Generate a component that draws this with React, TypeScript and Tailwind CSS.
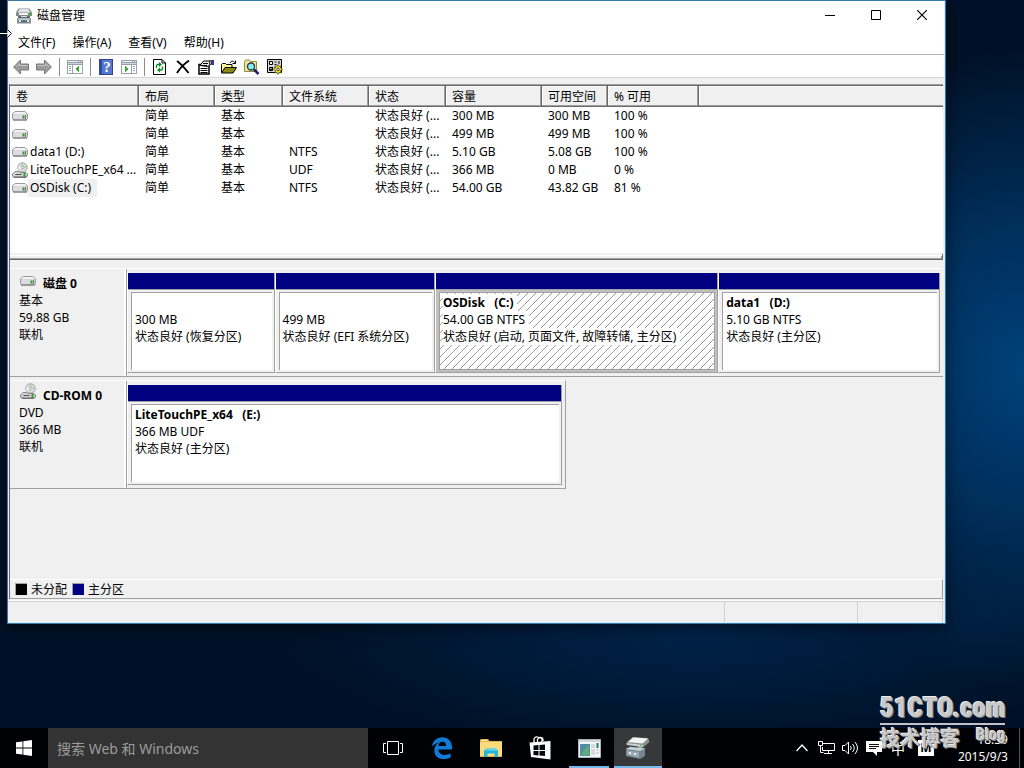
import React from "react";

interface Volume {
  name: string;
  kind: "disk" | "cd";
  fs: string;
  capacity: string;
  free: string;
  percent: string;
  selected?: boolean;
}

interface Part {
  title: string;
  size: string;
  status: string;
  grow: string;
  selected?: boolean;
}

const volumes: Volume[] = [
  { name: "", kind: "disk", fs: "", capacity: "300 MB", free: "300 MB", percent: "100 %" },
  { name: "", kind: "disk", fs: "", capacity: "499 MB", free: "499 MB", percent: "100 %" },
  { name: "data1 (D:)", kind: "disk", fs: "NTFS", capacity: "5.10 GB", free: "5.08 GB", percent: "100 %" },
  { name: "LiteTouchPE_x64 ...", kind: "cd", fs: "UDF", capacity: "366 MB", free: "0 MB", percent: "0 %" },
  { name: "OSDisk (C:)", kind: "disk", fs: "NTFS", capacity: "54.00 GB", free: "43.82 GB", percent: "81 %", selected: true },
];

const columns = [
  { label: "卷", width: "w-[129px]" },
  { label: "布局", width: "w-[76px]" },
  { label: "类型", width: "w-[68px]" },
  { label: "文件系统", width: "w-[86px]" },
  { label: "状态", width: "w-[77px]" },
  { label: "容量", width: "w-[96px]" },
  { label: "可用空间", width: "w-[66px]" },
  { label: "% 可用", width: "w-[91px]" },
  { label: "", width: "" },
];

const diskParts: Part[] = [
  { title: "", size: "300 MB", status: "状态良好 (恢复分区)", grow: "flex-[147]" },
  { title: "", size: "499 MB", status: "状态良好 (EFI 系统分区)", grow: "flex-[160]" },
  { title: "OSDisk   (C:)", size: "54.00 GB NTFS", status: "状态良好 (启动, 页面文件, 故障转储, 主分区)", grow: "flex-[284]", selected: true },
  { title: "data1   (D:)", size: "5.10 GB NTFS", status: "状态良好 (主分区)", grow: "flex-[222]" },
];

const cdParts: Part[] = [
  { title: "LiteTouchPE_x64   (E:)", size: "366 MB UDF", status: "状态良好 (主分区)", grow: "flex-1" },
];

const DiskIcon = () => (
  <svg width="16" height="10" viewBox="0 0 16 10" className="shrink-0">
    <path d="M3 .5h10l2.500 2.500v4.500l-1 1.500h-13L.5 7.500V3z" fill="#d6d6da" stroke="#9a9a9d" />
    <path d="M3.500 1h9l2 2h-13z" fill="#f3f3f4" />
    <path d="M1.500 4h11v3.500h-11z" fill="#dcdce2" />
    <path d="M1 9h14" stroke="#77777a" />
    <path d="M11.500 4.500v3" stroke="#2d9a2a" strokeWidth="2" />
    <path d="M13.500 4v4" stroke="#777" />
  </svg>
);

const CdIcon = () => (
  <svg width="16" height="16" viewBox="0 0 16 16" className="shrink-0">
    <circle cx="10.500" cy="5.500" r="4.700" fill="#dcdedd" stroke="#9a9c9b" />
    <path d="M10.500 5.500 9 1.300h3zM10.500 5.500l4-2 .5 3z" fill="#abd8ad" />
    <path d="M10.500 5.500 6.500 4v4z" fill="#f7f7f7" />
    <circle cx="10.500" cy="5.500" r="1.300" fill="#fff" stroke="#888" strokeWidth=".7" />
    <path d="M3 9.500h4l1 1h6l1.500 1.500v2L14 15.500H2L.5 14v-2z" fill="#d2d2d5" stroke="#88888a" />
    <path d="M3.500 12.500h6" stroke="#555" />
    <path d="M1.500 15h13" stroke="#606063" />
    <path d="M12.500 11v4" stroke="#37a132" strokeWidth="2" />
  </svg>
);

const TitleIcon = () => (
  <svg width="16" height="16" viewBox="0 0 16 16">
    <path d="M2.500.5h11L16 4.500V8H0V4.500z" fill="#85898c" />
    <path d="M3.500 1h9l2 3.500h-13z" fill="#dfe1e3" />
    <path d="M3 5h9v2H3z" fill="#f4f4f4" />
    <path d="M13 5h2v2h-2z" fill="#2eb12b" />
    <path d="M2 8h12v2H2z" fill="#5d676d" />
    <path d="M5 8h6v1H5z" fill="#dadfe2" />
    <path d="M1 10h14v5.500H1z" fill="#7c8a92" />
    <path d="M2 10h12v2H2z" fill="#b5c0c6" />
    <path d="M3 12h2v2H3zM11 12h2v2h-2z" fill="#e1e6e9" />
    <path d="M5 13h6v1H5z" fill="#55626a" />
  </svg>
);

const ArrowIcon = ({ flip }: { flip?: boolean }) => (
  <svg width="16" height="16" viewBox="0 0 16 16" className={flip ? "-scale-x-100" : ""}>
    <path d="M.6 8 7.500 1v4h8v6h-8v4z" fill="#9b9b9b" stroke="#777" />
    <path d="M3 8l3.500-3.500v2h8" fill="none" stroke="#c4c4c4" />
  </svg>
);

const PaneIcon = ({ right }: { right?: boolean }) => (
  <svg width="16" height="14" viewBox="0 0 16 14" shapeRendering="crispEdges">
    <rect width="16" height="14" fill="#97a2ad" />
    <path d="M1 1h10v1H1zM12 1h1v1h-1zM14 1h1v1h-1z" fill="#eef1f4" />
    <path d="M1 3h14v1H1z" fill="#cfd6dd" />
    <path d={right ? "M1 5h9v8H1zM11 5h4v8h-4z" : "M1 5h4v8H1zM6 5h9v8H6z"} fill="#fff" />
    <path
      d={right ? "M12 6h2v1h-2zM12 8h2v1h-2zM12 10h2v1h-2z" : "M2 6h2v1H2zM2 8h2v1H2zM2 10h2v1H2z"}
      fill="#97a2ad"
    />
    <path d={right ? "M4 6v6l4-3z" : "M12 6v6L8 9z"} fill="#3daa35" />
  </svg>
);

const HelpIcon = () => (
  <svg width="14" height="16" viewBox="0 0 14 16">
    <rect x=".5" y=".5" width="13" height="15" fill="#5577cf" stroke="#2d478f" />
    <path d="M1 1h2v14H1z" fill="#2f4da4" />
    <text x="8" y="13" textAnchor="middle" fontSize="15" fontWeight="bold" fill="#fff" fontFamily="Liberation Serif, serif">?</text>
  </svg>
);

const RefreshIcon = () => (
  <svg width="13" height="16" viewBox="0 0 13 16">
    <path d="M.5.500h8.500l3.500 3.500v11.500H.5z" fill="#fff" stroke="#000" />
    <path d="M9 .5V4h3.500" fill="none" stroke="#000" />
    <path d="M3.500 9V6.500l1-1H7M9.500 7.500v2.500l-1 1H6" fill="none" stroke="#078a1c" strokeWidth="1.300" />
    <path d="M6 3v5l3-2.500zM7 8.500v5L4 11z" fill="#078a1c" />
  </svg>
);

const DeleteIcon = () => (
  <svg width="14" height="14" viewBox="0 0 14 14">
    <path d="M1 1c5 3.500 8 7.500 11.500 12M13 .5C8 4 4 8 1 13" fill="none" stroke="#000" strokeWidth="1.800" />
  </svg>
);

const PropertiesIcon = () => (
  <svg width="16" height="16" viewBox="0 0 16 16">
    <path d="M1 5.500h10v9.500H1z" fill="#fff" stroke="#000" strokeWidth="1.500" />
    <path d="M2.500 9.500h7M2.500 11.500h7M2.500 13.500h7" stroke="#000" />
    <path d="M2 6.500 5.500 2h6L13.500 4.500 10 7.500z" fill="#e6e6e6" stroke="#000" />
    <path d="M5 4.500h5M4 6.500h5" stroke="#000" />
    <path d="M11.500 1.500h2v4h-2z" fill="#aaa" stroke="#333" />
    <path d="M14 1h2v5h-2z" fill="#303b9c" />
  </svg>
);

const OpenIcon = () => (
  <svg width="16" height="14" viewBox="0 0 16 14">
    <path d="M.5 12.500V4.500l1-1h3l1 1h5.500v3" fill="#fff799" stroke="#000" />
    <path d="M.5 13 4 7.500h11.500L12 13z" fill="#8c8a13" stroke="#000" />
    <path d="M9 3c1-2.500 4-2.500 5 0M14.500.500v3h-3" fill="none" stroke="#000" />
  </svg>
);

const SearchFolderIcon = () => (
  <svg width="16" height="16" viewBox="0 0 16 16">
    <path d="M.5 12.500v-10l1-1.500h4l1 1.500h6v10z" fill="#f0e494" stroke="#918a42" />
    <circle cx="7" cy="7.500" r="3.500" fill="#86f1f1" stroke="#23364d" strokeWidth="1.300" />
    <path d="m10 10.500 4.500 4.500" stroke="#10206d" strokeWidth="2.500" />
  </svg>
);

const SettingsIcon = () => (
  <svg width="16" height="16" viewBox="0 0 16 16">
    <path d="M.5.500h14v13H.5z" fill="#d8d8d8" stroke="#000" />
    <path d="M2.500 2.500h3v3h-3zM2.500 8.500h3v3h-3z" fill="#fff" stroke="#000" />
    <path d="m3 9.500 1 1.500 2-3M7.500 3h2M7.500 5.500h2M12 2v3M7.500 8.500h1" fill="none" stroke="#000" />
    <path d="m11 5.500 1 2 2-.5-.5 2 2 1.500-2 1 .5 2.500-2-.5-1 2-1-2-2 .5.500-2.500-2-1 2-1.500-.5-2 2 .5z" fill="#f5e632" stroke="#444000" strokeWidth=".7" />
    <circle cx="11" cy="10.500" r="1.300" fill="#fff" stroke="#333" />
  </svg>
);

const ToolButton = ({ label, children }: { label: string; children: React.ReactNode }) => (
  <button aria-label={label} className="flex h-[22px] w-[23px] items-center justify-center">
    {children}
  </button>
);

const ToolSeparator = () => (
  <div className="flex w-2 justify-center">
    <div className="h-[18px] w-px bg-[#8c8c8c]" />
  </div>
);

const Partition = ({ part }: { part: Part }) => (
  <div className={`${part.grow} flex min-w-0 flex-col border-l border-r border-b border-l-white border-r-[#a0a0a0] border-b-[#a0a0a0]`}>
    <div className="h-[17px] border-b border-[#a0a0a0] bg-[#000080]" />
    <div className={`flex-1 p-[2px] pl-[3px] ${part.selected ? "bg-[#c0c0c0]" : "bg-[#f0f0f0]"}`}>
      <div
        className={`relative h-[78px] overflow-hidden border-t border-l border-[#a0a0a0] bg-white pt-px pl-[3px] whitespace-pre ${
          part.selected ? "border-r border-b" : ""
        }`}
      >
        {part.selected && (
          <svg className="absolute inset-0 h-full w-full" shapeRendering="crispEdges">
            <defs>
              <pattern id="hatch" width="8" height="8" patternUnits="userSpaceOnUse">
                <path
                  d="M0 7h1v1H0zM1 6h1v1H1zM2 5h1v1H2zM3 4h1v1H3zM4 3h1v1H4zM5 2h1v1H5zM6 1h1v1H6zM7 0h1v1H7z"
                  fill="#a0a0a0"
                />
              </pattern>
            </defs>
            <rect width="100%" height="100%" fill="url(#hatch)" />
          </svg>
        )}
        <div className="relative flex flex-col items-start leading-[17px]">
          <strong className="h-[17px] bg-white pr-1">{part.title}</strong>
          <span className="bg-white pr-1">{part.size}</span>
          <span className="bg-white pr-1">{part.status}</span>
        </div>
      </div>
    </div>
  </div>
);

interface DiskRowProps {
  icon: React.ReactNode;
  title: string;
  lines: string[];
  parts: Part[];
  className: string;
}

const DiskRow = ({ icon, title, lines, parts, className }: DiskRowProps) => (
  <div className={`flex border-t border-b border-t-white border-b-[#a0a0a0] ${className}`}>
    <div className="w-[117px] shrink-0 border-r border-[#a0a0a0] pt-[6px] pl-[9px] leading-[17px] shadow-[inset_-2px_0_0_#fff]">
      <div className="flex h-[17px] gap-[7px] pl-px">
        {icon}
        <strong>{title}</strong>
      </div>
      {lines.map((line) => (
        <div key={line}>{line}</div>
      ))}
    </div>
    <div className="flex h-[107px] min-w-0 flex-1 pt-1 pr-[3px] pb-[3px]">
      {parts.map((part) => (
        <Partition key={part.size} part={part} />
      ))}
    </div>
  </div>
);

const VolumeTable = () => (
  <table className="w-full table-fixed border-separate border-spacing-0 text-left whitespace-nowrap">
    <thead>
      <tr>
        {columns.map((col, i) => (
          <th
            key={i}
            className={`${col.width} h-[21px] bg-[#f0f0f0] p-0 pl-[6px] font-normal ${
              col.label
                ? "shadow-[inset_-1px_-1px_0_#696969,inset_-2px_-2px_0_#a0a0a0,inset_1px_1px_0_#fff]"
                : "shadow-[inset_0_-1px_0_#696969,inset_0_-2px_0_#a0a0a0,inset_1px_1px_0_#fff]"
            }`}
          >
            {col.label}
          </th>
        ))}
      </tr>
    </thead>
    <tbody className="leading-[18px]">
      {volumes.map((v, i) => (
        <tr key={i} className="h-[18px]">
          <td className="p-0 pl-[2px]">
            <div className="flex h-[18px] items-center">
              {v.kind === "cd" ? <CdIcon /> : <DiskIcon />}
              <span className={`pl-[2px] ${v.selected ? "bg-[#f0f0f0] pr-[6px]" : ""}`}>{v.name}</span>
            </div>
          </td>
          <td className="p-0 pl-[6px]">简单</td>
          <td className="p-0 pl-[6px]">基本</td>
          <td className="p-0 pl-[6px]">{v.fs}</td>
          <td className="p-0 pl-[6px]">状态良好 (...</td>
          <td className="p-0 pl-[6px]">{v.capacity}</td>
          <td className="p-0 pl-[6px]">{v.free}</td>
          <td className="p-0 pl-[6px]">{v.percent}</td>
          <td className="p-0"></td>
        </tr>
      ))}
    </tbody>
  </table>
);

const TaskButton = ({ label, state, children }: { label: string; state?: "open" | "active"; children: React.ReactNode }) => (
  <button aria-label={label} className={`relative flex h-10 w-12 items-center justify-center ${state === "active" ? "bg-[#37383a]" : ""}`}>
    {children}
    {state && (
      <span className={`absolute bottom-0 h-[2px] bg-[#76b9ed] ${state === "active" ? "inset-x-0" : "inset-x-1"}`} />
    )}
  </button>
);

const Taskbar = () => (
  <footer className="flex h-10 shrink-0 bg-[#000104] text-white">
    <button aria-label="开始" className="flex w-12 items-center justify-center">
      <svg width="16" height="16" viewBox="0 0 16 16" fill="#fff">
        <path d="M0 2.300 6.500 1.400v6.200H0zM7.300 1.300 16 0v7.600H7.300zM0 8.400h6.500v6.200L0 13.700zM7.300 8.400H16V16l-8.700-1.300z" />
      </svg>
    </button>
    <input
      aria-label="搜索"
      placeholder="搜索 Web 和 Windows"
      className="w-80 bg-[#333333] px-[9px] text-[14px] outline-none placeholder:text-[#9b9b9b]"
    />
    <div className="flex gap-px pl-px">
      <TaskButton label="任务视图">
        <svg width="20" height="14" viewBox="0 0 20 14" fill="none" stroke="#fff">
          <path d="M4.500.500h11v13h-11zM3 2.500H.5v9H3M17 2.500h2.500v9H17" />
        </svg>
      </TaskButton>
      <TaskButton label="Microsoft Edge">
        <svg width="20" height="22" viewBox="0 0 20 22" fill="#0f7bd7">
          <path d="M0 9.800C.8 4 4.800.3 10.300.3 16.500.3 20 4.700 20 10.200v2.400H6.300c.2 3.600 3 5.300 6.300 5.300 2.300 0 4.200-.6 6-1.700v4.200c-2 1.100-4.400 1.600-7 1.600-5.600 0-9.300-3.300-9.300-8.600 0-4 2.200-6.700 5.300-8.200C5.300 5.600 2 7 0 9.800zm6.500-.9h7.600c0-2.600-1.300-4.200-3.700-4.200-2.300 0-3.700 1.900-3.900 4.200z" />
        </svg>
      </TaskButton>
      <TaskButton label="文件资源管理器">
        <svg width="22" height="18" viewBox="0 0 22 18">
          <path d="M0 1 1 0h7l1.500 2H22v16H0z" fill="#e9b64d" />
          <path d="M1 3h21v14H0V4z" fill="#fbdc7b" />
          <path d="M1 1h6v1H1z" fill="#fff3c5" />
          <path d="M4 18v-6.500L6 9.500h10l2 2V18h-3.500v-3.500h-7V18z" fill="#25b4dc" />
          <path d="M4 11.500 6 9.500h10l2 2z" fill="#68d7ee" />
        </svg>
      </TaskButton>
      <TaskButton label="应用商店">
        <svg width="22" height="24" viewBox="0 0 22 24">
          <path d="M5 8V3.500C5 1.500 7 .5 8.500 1L13 2.500V6M8.500 6V3.500C9.500.8 13.500.5 14 3.500V5" fill="none" stroke="#fff" strokeWidth="1.300" />
          <path d="M.5 6.500 21.500 5v18.500L2 21z" fill="#fff" />
          <path d="m4.500 9.500 5-.4v5h-5zM10.500 9l5.500-.5v5.600h-5.500zM4.500 15h5v4.500l-5-.5zM10.500 15H16v5l-5.500-.5z" fill="#02050a" />
        </svg>
      </TaskButton>
      <TaskButton label="服务器管理器" state="open">
        <svg width="23" height="19" viewBox="0 0 23 19">
          <path d="M.5.500h22v18H.5z" fill="#f5f5f5" stroke="#aeb2b3" />
          <path d="M1 1h21v2H1z" fill="#d3d6d8" />
          <path d="M2 5h10v12H2z" fill="#548ba4" />
          <path d="M3 16 7 9l4-3v10z" fill="#5cad7c" />
          <path d="M13 6h4M13 8h4M13 11h4M13 13h4M13 15h4" stroke="#bbb" />
          <path d="M19.500 4v5" stroke="#1e806c" strokeWidth="2" />
          <path d="M18 11h3M18 14h3" stroke="#bbb" />
        </svg>
      </TaskButton>
      <TaskButton label="磁盘管理" state="active">
        <svg width="24" height="22" viewBox="0 0 24 22">
          <path d="m7 0 15 1 1.500 4-6 5L0 7.500 1 5z" fill="#8c908f" />
          <path d="m7 .5 15 1-5.500 5L2 5z" fill="#f4f4f0" />
          <path d="m1 6 16 2v2L1 8z" fill="#ccd0cf" />
          <path d="m14 8 2 .3V10l-2-.3z" fill="#38d332" />
          <path d="M12 9h4v4h-4z" fill="#afbdc2" />
          <path d="m0 12 4-2.500 15 1.500v8l-5 3L0 19z" fill="#76868f" />
          <path d="m0 12 4-2 15 1.500-5 2.500z" fill="#c4d1d8" />
          <path d="m1 13.500 12 1.500v5.500L1 18z" fill="#97a9b3" />
          <path d="M4 15v2M9 16v2" stroke="#e8eef1" strokeWidth="2" />
        </svg>
      </TaskButton>
    </div>

    <div className="ml-auto flex items-center pr-1">
      <button aria-label="显示隐藏的图标" className="flex w-6 justify-center">
        <svg width="12" height="8" viewBox="0 0 12 8" fill="none" stroke="#fff">
          <path d="m.5 7 5.500-6 5.500 6" strokeWidth="1.300" />
        </svg>
      </button>
      <button aria-label="网络" className="flex w-6 justify-center">
        <svg width="17" height="14" viewBox="0 0 17 14" fill="none" stroke="#fff">
          <path d="M5 2.500h11.500v7H4.500V6M.5.500h4v4h-4zM2.500 4.500v7M10.500 9.500v3M6 12.500h8M2.500 11.500h3" />
        </svg>
      </button>
      <button aria-label="音量" className="flex w-6 justify-center">
        <svg width="17" height="14" viewBox="0 0 17 14" fill="none" stroke="#fff">
          <path d="M.5 4.500H3L6.500 1v12L3 9.500H.5zM8.500 5q1.500 2 0 4M10.500 3q3.500 4 0 8M13 1q5 6 0 12" />
        </svg>
      </button>
      <button aria-label="通知" className="flex w-6 justify-center">
        <svg width="16" height="16" viewBox="0 0 16 16">
          <path d="M0 1h16v11h-5v4l-4-4H0z" fill="#fff" />
          <path d="M3 4.500h10M3 6.500h10M3 8.500h7" stroke="#111" />
        </svg>
      </button>
      <button className="w-6 text-center text-[14px]">中</button>
      <button className="ml-2 h-4 w-4 bg-white text-center text-[12px] leading-4 font-bold text-black">M</button>
      <div className="ml-5 w-[54px] text-right text-[12px] leading-[17px]">
        <div>18:39</div>
        <div>2015/9/3</div>
      </div>
      <div className="ml-[11px] h-10 w-px bg-[#55585c]" />
    </div>
  </footer>
);

const App: React.FC = () => {
  return (
    <div className="relative flex h-screen flex-col overflow-hidden bg-[#001127] bg-[radial-gradient(ellipse_260px_320px_at_100%_48%,#00417a_0%,#002f5b_45%,transparent_100%),radial-gradient(ellipse_420px_120px_at_68%_82%,#00234a_0%,transparent_100%)] font-['Noto_Sans','Noto_Sans_CJK_SC',sans-serif] text-[12px] text-black">
      <main className="flex min-h-0 flex-1 pr-[78px] pb-[104px] pl-[7px]">
        <section className="flex min-w-0 flex-1 flex-col border border-[#3978a8] bg-white shadow-[0_4px_14px_rgba(0,0,0,0.5)]">
          <div className="flex min-h-0 flex-1 flex-col border-r border-b border-[#cdf1fb]">
            <header className="flex h-[29px] shrink-0 items-center pl-2">
              <TitleIcon />
              <h1 className="pl-[5px]">磁盘管理</h1>
              <div className="-mr-px ml-auto flex h-7 self-start">
                <button aria-label="最小化" className="flex w-[46px] items-center justify-center">
                  <svg width="10" height="10" viewBox="0 0 10 10" stroke="#000">
                    <path d="M0 5.500h10" />
                  </svg>
                </button>
                <button aria-label="最大化" className="flex w-[46px] items-center justify-center">
                  <svg width="10" height="10" viewBox="0 0 10 10" fill="none" stroke="#000">
                    <path d="M.5.500h9v9h-9z" />
                  </svg>
                </button>
                <button aria-label="关闭" className="flex w-[46px] items-center justify-center">
                  <svg width="10" height="10" viewBox="0 0 10 10" stroke="#000">
                    <path d="m0 0 10 10M10 0 0 10" strokeWidth="1.200" />
                  </svg>
                </button>
              </div>
            </header>

            <nav className="flex h-[25px] shrink-0 items-center gap-[17px] border-b border-[#b4b4b4] pt-[2px] pl-[10px]">
              <button>文件(F)</button>
              <button>操作(A)</button>
              <button>查看(V)</button>
              <button>帮助(H)</button>
            </nav>

            <div className="flex h-[23px] shrink-0 items-center border-b border-[#d6d6d6] pt-px pl-px">
              <ToolButton label="后退"><ArrowIcon /></ToolButton>
              <ToolButton label="前进"><ArrowIcon flip /></ToolButton>
              <ToolSeparator />
              <ToolButton label="显示控制台树"><PaneIcon /></ToolButton>
              <ToolSeparator />
              <ToolButton label="帮助"><HelpIcon /></ToolButton>
              <ToolButton label="显示操作窗格"><PaneIcon right /></ToolButton>
              <ToolSeparator />
              <ToolButton label="刷新"><RefreshIcon /></ToolButton>
              <ToolButton label="删除"><DeleteIcon /></ToolButton>
              <ToolButton label="属性"><PropertiesIcon /></ToolButton>
              <ToolButton label="打开"><OpenIcon /></ToolButton>
              <ToolButton label="浏览"><SearchFolderIcon /></ToolButton>
              <ToolButton label="设置"><SettingsIcon /></ToolButton>
            </div>

            <div className="flex min-h-0 flex-1 flex-col bg-[#f0f0f0] px-px pt-[6px]">
              <div className="flex min-h-0 flex-1 flex-col border-t border-l border-t-[#a0a0a0] border-l-[#696969]">
                <div className="h-[168px] shrink-0 border-t border-[#696969] bg-white">
                  <VolumeTable />
                </div>
                <div className="h-[7px] shrink-0 border-t-2 border-r border-b border-t-[#f0f0f0] border-r-[#696969] border-b-[#696969] shadow-[inset_0_1px_0_#fff,inset_-1px_-1px_0_#a0a0a0]" />

                <div className="flex min-h-0 flex-1 flex-col gap-[3px] pt-2">
                  <DiskRow
                    icon={<div className="pt-px"><DiskIcon /></div>}
                    title="磁盘 0"
                    lines={["基本", "59.88 GB", "联机"]}
                    parts={diskParts}
                    className=""
                  />
                  <div className="flex">
                    <DiskRow
                      icon={<div className="-mt-1"><CdIcon /></div>}
                      title="CD-ROM 0"
                      lines={["DVD", "366 MB", "联机"]}
                      parts={cdParts}
                      className="flex-[556] border-r border-r-[#a0a0a0]"
                    />
                    <div className="flex-[377]" />
                  </div>
                </div>

                <div className="flex h-5 shrink-0 items-center border-t border-r border-b border-t-white border-r-[#a0a0a0] border-b-[#a0a0a0] pl-[5px]">
                  <span className="h-3 w-3 border-t border-l border-[#a0a0a0] bg-black" />
                  <span className="pt-px pl-1">未分配</span>
                  <span className="ml-[5px] h-3 w-3 border-t border-l border-[#a0a0a0] bg-[#000080]" />
                  <span className="pt-px pl-1">主分区</span>
                </div>
              </div>
            </div>

            <div className="h-[3px] shrink-0 border-t border-b border-t-[#f0f0f0] border-b-[#d2d2d2] bg-white" />
            <div className="flex h-5 shrink-0 bg-[#f0f0f0] pr-px">
              <div className="flex-1 border-r border-[#d2d2d2]" />
              <div className="w-[133px] border-r border-[#d2d2d2]" />
              <div className="w-[85px] border-r border-[#d2d2d2]" />
            </div>
          </div>
        </section>
      </main>

      <Taskbar />

      {/* resize pointer at the window edge */}
      <svg className="absolute top-[28px] left-0" width="13" height="11" viewBox="0 0 13 11">
        <path d="M7.500 1.500 11.500 5.500l-4 4" fill="#fff" stroke="#111" />
        <path d="M0 5.500h9" stroke="#fff" />
      </svg>

      <div className="pointer-events-none absolute right-[19px] bottom-[15px] w-[125px] font-bold text-[#c9c9c9] [text-shadow:1px_1px_0_#77777a,-1px_-1px_0_#ececec]">
        <div className="border-b-2 border-[#c4c0cc] text-[27px] leading-[30px] font-black whitespace-nowrap font-['Roboto_Condensed','Liberation_Sans',sans-serif]">
          51CTO.com
        </div>
        <div className="flex h-7 justify-between">
          <span className="text-[20px] leading-[28px]">技术博客</span>
          <span className="text-[16px] leading-[20px] font-['Roboto_Condensed','Liberation_Sans',sans-serif]">Blog</span>
        </div>
      </div>
    </div>
  );
};

export default App;
